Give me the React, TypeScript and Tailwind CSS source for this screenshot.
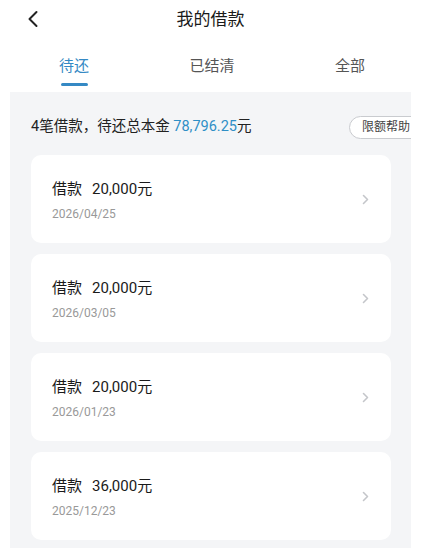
/** Loan list page: pending / settled / all tabs with a card per loan. */

const loans = [
  { amount: '20,000', date: '2026/04/25' },
  { amount: '20,000', date: '2026/03/05' },
  { amount: '20,000', date: '2026/01/23' },
  { amount: '36,000', date: '2025/12/23' },
];

const font = "font-['Roboto','Noto_Sans_CJK_SC',sans-serif]";

function ChevronLeft() {
  return (
    <svg width="12" height="18" viewBox="0 0 12 18" fill="none">
      <path d="M9.5 2 L2.5 9 L9.5 16" stroke="#222" strokeWidth="2" strokeLinecap="round" strokeLinejoin="round" />
    </svg>
  );
}

function ChevronRight() {
  return (
    <svg width="7" height="11" viewBox="0 0 7 11" fill="none">
      <path d="M1.5 1.5 L5.5 5.5 L1.5 9.5" stroke="#c4c6ca" strokeWidth="1.6" strokeLinecap="round" strokeLinejoin="round" />
    </svg>
  );
}

export default function App() {
  return (
    <div className={`${font} flex h-[548px] w-[421px] flex-col overflow-hidden bg-white`}>
      <div className="relative flex h-[40px] shrink-0 items-center justify-center">
        <button type="button" aria-label="返回" className="absolute left-[27px] top-[10px]">
          <ChevronLeft />
        </button>
        <span className="text-[17px] text-[#1a1a1a]">我的借款</span>
      </div>

      <div className="ml-[5px] mr-[9px] flex h-[52px] shrink-0 overflow-hidden">
        <div className="flex w-[138px] shrink-0 flex-col items-center pt-[14px]">
          <span className="text-[15px] leading-[24px] text-[#3589c4]">待还</span>
          <span className="mt-[5px] h-[3px] w-[27px] rounded-full bg-[#3589c4]" />
        </div>
        <div className="flex w-[138px] shrink-0 flex-col items-center pt-[14px]">
          <span className="text-[15px] leading-[24px] text-[#555]">已结清</span>
        </div>
        <div className="flex w-[138px] shrink-0 flex-col items-center pt-[14px]">
          <span className="text-[15px] leading-[24px] text-[#555]">全部</span>
        </div>
      </div>

      <div className="mx-[10px] flex flex-1 flex-col overflow-hidden bg-[#f4f5f7] pl-[21px] pr-[20px]">
        <div className="flex h-[63px] shrink-0 items-center justify-between pt-[7px]">
          <span className="text-[14.5px] text-[#222]">
            4笔借款，待还总本金 <span className="text-[#2f8fc6]">78,796.25</span>元
          </span>
          <span className="-mr-[40px] flex h-[23px] items-center rounded-full border border-[#c9cbcf] bg-white pl-[12px] pr-[20px] text-[12px] text-[#444]">
            限额帮助
          </span>
        </div>

        <div className="flex flex-col gap-[11px]">
          {loans.map((loan) => (
            <div
              key={loan.date}
              className="flex h-[88px] shrink-0 items-center justify-between rounded-[10px] bg-white pl-[21px] pr-[22px]"
            >
              <div className="flex flex-col pt-[2px]">
                <span className="text-[15px] leading-[22px] text-[#1a1a1a]">
                  借款<span className="ml-[10px]">{loan.amount}元</span>
                </span>
                <span className="mt-[5px] text-[12px] leading-[18px] text-[#999]">{loan.date}</span>
              </div>
              <ChevronRight />
            </div>
          ))}
        </div>
      </div>
    </div>
  );
}
